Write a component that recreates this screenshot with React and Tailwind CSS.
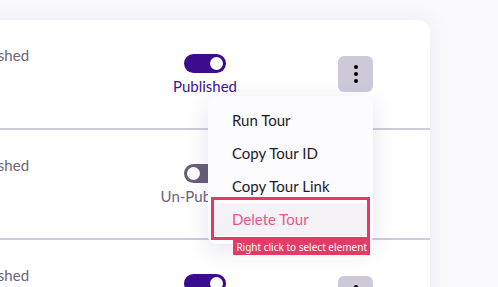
import { useState } from "react";

const rows = [
  { id: 1, note: "Published", on: true },
  { id: 2, note: "Published", on: false },
  { id: 3, note: "Published", on: true },
];

const menuItems = ["Run Tour", "Copy Tour ID", "Copy Tour Link", "Delete Tour"];

function Toggle({ on }) {
  return (
    <div
      className={
        "flex h-[19px] w-[42px] items-center rounded-full px-[3px] " +
        (on ? "justify-end bg-[#3c0c8f]" : "justify-start bg-[#675f76]")
      }
    >
      <span className="h-[13px] w-[13px] rounded-full bg-white" />
    </div>
  );
}

function Kebab() {
  return (
    <button className="flex h-[36px] w-[35px] flex-col items-center justify-center gap-[3px] rounded-md bg-[#cdc9d9]">
      <span className="h-[4px] w-[4px] rounded-full bg-black" />
      <span className="h-[4px] w-[4px] rounded-full bg-black" />
      <span className="h-[4px] w-[4px] rounded-full bg-black" />
    </button>
  );
}

export default function App() {
  const [openId] = useState(1);

  return (
    <div
      className="h-[287px] w-full overflow-hidden bg-[#fafafc]"
      style={{ fontFamily: "Lato, 'Open Sans', sans-serif" }}
    >
      <div className="ml-[-240px] mt-5 w-[670px] rounded-xl bg-white shadow-[0_0_22px_rgba(90,70,150,0.09)]">
        {rows.map((row) => (
          <div
            key={row.id}
            className="flex h-[110px] items-start border-b-2 border-[#cfcbdb] last:border-b-0"
          >
            <div className="w-[205px]" />
            <div className="mt-[25px] w-[190px] text-[15px] leading-5 text-[#6b6478]">
              {row.note}
            </div>
            <div className="mt-[34px] flex w-[100px] flex-col items-center">
              <Toggle on={row.on} />
              <span
                className={
                  "mt-[3px] whitespace-nowrap text-[15px] leading-5 " +
                  (row.on ? "text-[#3d1192]" : "text-[#6b6478]")
                }
              >
                {row.on ? "Published" : "Un-Published"}
              </span>
            </div>
            <div className="w-[83px]" />
            <div className="relative mt-[36px]">
              <Kebab />
              {openId === row.id && (
                <div className="absolute right-0 top-[40px] z-10 w-[165px] rounded-lg bg-[#fcfbfd] py-2 shadow-[0_6px_24px_rgba(70,50,130,0.14)]">
                  {menuItems.map((item) => {
                    const del = item === "Delete Tour";
                    return (
                      <div
                        key={item}
                        className={
                          "relative mx-1 flex h-[33px] items-center rounded-md px-5 text-[15px] " +
                          (del ? "bg-[#f4f2f7] text-[#e9578a]" : "text-[#1e1a27]")
                        }
                      >
                        {item}
                        {del && (
                          <>
                            <div className="pointer-events-none absolute left-[-1px] right-[-1px] top-[-6px] bottom-[-4px] border-[3px] border-[#e13c65]" />
                            <div
                              className="absolute right-[-1px] top-[37px] whitespace-nowrap bg-[#e13c65] px-[3px] text-[10px] leading-[15px] text-white"
                              style={{ fontFamily: "'Noto Sans', 'DejaVu Sans', sans-serif" }}
                            >
                              Right click to select element
                            </div>
                          </>
                        )}
                      </div>
                    );
                  })}
                </div>
              )}
            </div>
          </div>
        ))}
      </div>
    </div>
  );
}
